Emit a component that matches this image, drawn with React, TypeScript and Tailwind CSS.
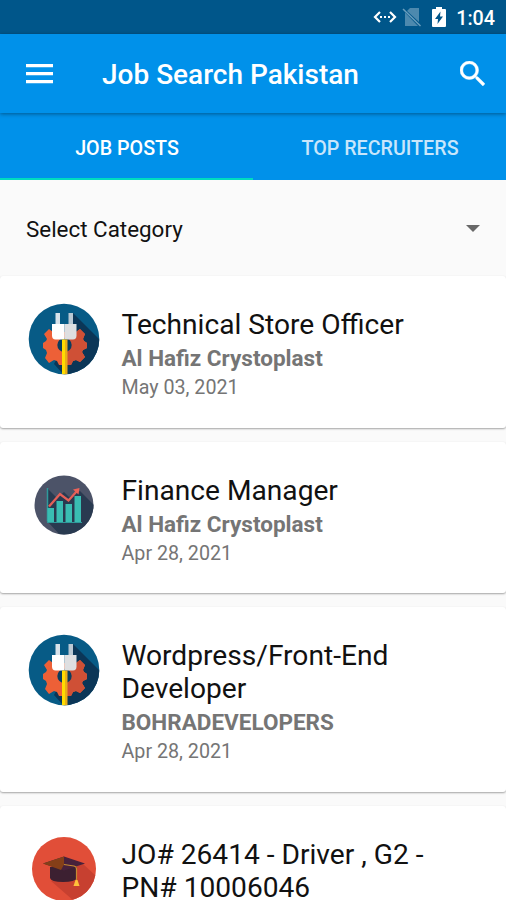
const jobs = [
  {
    title: "Technical Store Officer",
    company: "Al Hafiz Crystoplast",
    date: "May 03, 2021",
    icon: PlugIcon,
    height: "h-[151.5px]",
  },
  {
    title: "Finance Manager",
    company: "Al Hafiz Crystoplast",
    date: "Apr 28, 2021",
    icon: ChartIcon,
    height: "h-[151.5px]",
  },
  {
    title: "Wordpress/Front-End Developer",
    company: "BOHRADEVELOPERS",
    date: "Apr 28, 2021",
    icon: PlugIcon,
    height: "h-[185px]",
  },
  {
    title: "JO# 26414 - Driver , G2 - PN# 10006046",
    icon: GraduationIcon,
    height: "h-[185px]",
  },
];

function PlugIcon() {
  return (
    <svg viewBox="0 0 72 72" className="size-[72px]">
      <defs>
        <clipPath id="plug-circle">
          <circle cx="36" cy="36" r="35.3" />
        </clipPath>
      </defs>
      <g clipPath="url(#plug-circle)">
        <rect width="72" height="72" fill="#075b86" />
        <path d="M45 10 L72 37 V72 H36 L26 61 L44 25Z" fill="#0b3657" />
        <path
          d="M21 26 L25 29 H48 L52 26 L57 31 L55 36 L56 38 L59 40 V45 L55 47 L54 49 L57 54 L52 59 L48 57 L45 58 L43 62 H31 L29 58 L26 57 L21 60 L17 55 L19 50 L18 47 L15 45 V40 L18 38 L19 36 L16 31Z"
          fill="#ed6037"
        />
        <path d="M37 29H48 L52 26 L57 31 L55 36 L56 38 L59 40 V45 L55 47 L54 49 L57 54 L52 59 L48 57 L45 58 L43 62 H37Z" fill="#cf5036" />
        <circle cx="36.5" cy="42" r="7.2" fill="#0b3d5e" />
        <path d="M27.500 10h4.500v12h-4.500z" fill="#d8e2ea" />
        <path d="M40.500 10h4.500v12h-4.500z" fill="#b9c8d3" />
        <path d="M24 21h12.500v15.500h-9q-3.500 0-3.500-4z" fill="#fff" />
        <path d="M36.500 21h12v11.500q0 4-3.500 4h-8.500z" fill="#dedfe1" />
        <path d="M34 36.500h3V72h-3z" fill="#ffdc00" />
        <path d="M37 36.500h2.500V72H37z" fill="#e9ae18" />
      </g>
    </svg>
  );
}

function ChartIcon() {
  return (
    <svg viewBox="0 0 60 60" className="size-[60px]">
      <defs>
        <clipPath id="chart-circle">
          <circle cx="30" cy="30" r="29.5" />
        </clipPath>
      </defs>
      <g clipPath="url(#chart-circle)">
        <rect width="60" height="60" fill="#4c5368" />
        <path d="M14 14 L23 23 L30 17 L35 22 L46 16 L60 30 V60 H26 L14 47Z" fill="#293a50" />
        <path d="M13.500 13v33.500" stroke="#2f9a9b" strokeWidth="1.5" />
        <path d="M13.500 33h6.500v14h-6.500zM22.500 26h6.500v21h-6.500zM31.500 29h6.500v18h-6.500zM40.500 21h6.500v26h-6.500z" fill="#39bdb2" />
        <path d="M13 47.500h35" stroke="#2f9a9b" />
        <path d="M15 31.500 L26 19 L34.500 25.500 L43 16" fill="none" stroke="#e46058" strokeWidth="2.3" />
        <path d="M39 14.500 L45.500 13 L44.500 19.500Z" fill="#ed6258" />
      </g>
    </svg>
  );
}

function GraduationIcon() {
  return (
    <svg viewBox="0 0 64 64" className="size-[64px]">
      <defs>
        <clipPath id="graduation-circle">
          <circle cx="32" cy="32" r="32" />
        </clipPath>
      </defs>
      <g clipPath="url(#graduation-circle)">
        <rect width="64" height="64" fill="#e14e38" />
        <path d="M50 26 L64 39 V64 H42 L19 44Z" fill="#c74030" />
        <path d="M18 30v11q1 4 13 4t14-4V30z" fill="#3c2031" />
        <path d="M11 26.500 L32 19.500 L53 26.500 L32 33.500Z" fill="#48213b" />
        <path d="M11 26.500 L32 19.500 V27.500 L29 33Z" fill="#853f18" />
        <path d="M32 27.500 L42 29 Q44.500 29.500 44.500 32v13" fill="none" stroke="#c58a32" strokeWidth="1.2" />
        <path d="M43.500 43h2l2 6h-6z" fill="#ffc13b" />
      </g>
    </svg>
  );
}

function StatusBar() {
  return (
    <div className="flex h-[34px] items-center justify-end bg-[#00568a] pr-[11px] text-white">
      <svg viewBox="0 0 24 14" className="mr-[5px] h-[14px] w-[24px]" fill="none">
        <path d="M7 2 L2 7 L7 12 M17 2 L22 7 L17 12" stroke="currentColor" strokeWidth="2.2" />
        <path d="M7 6h2v2H7zM11 6h2v2h-2zM15 6h2v2h-2z" fill="currentColor" />
      </svg>
      <svg viewBox="0 0 20 20" className="mr-[10px] size-5">
        <path d="M8 1h9v14L5 4z" fill="#4d89ae" />
        <path d="M3 5.500L16 19H3z" fill="#4d89ae" />
        <path d="M1 2l17.500 17" stroke="#6b9ebd" strokeWidth="1.5" />
      </svg>
      <svg viewBox="0 0 14 22" className="mr-[10px] h-[22px] w-[14px]">
        <path d="M4 1h6v2h3q1 0 1 1v16q0 1-1 1H1q-1 0-1-1V4q0-1 1-1h3z" fill="currentColor" />
        <path d="M8.500 5.500L8 10.500h3L5.500 18l.5-5H3z" fill="#00568a" />
      </svg>
      <span className="mt-[3px] text-[19.7px] leading-none font-medium">1:04</span>
    </div>
  );
}

export default function App() {
  return (
    <div className="h-[900px] w-[506px] overflow-hidden bg-[#fafafa] font-['Roboto',sans-serif]">
      <StatusBar />

      <header className="relative flex h-[79px] items-center bg-[#0091ea] text-white shadow-[0_1px_4px_rgba(0,0,0,0.4)]">
        <svg viewBox="0 0 27 20" className="ml-[26px] h-[20px] w-[27px]" fill="currentColor">
          <path d="M0 0h27v3.300H0zM0 8h27v3.300H0zM0 16h27v3.300H0z" />
        </svg>
        <h1 className="ml-[49px] flex-1 pt-[2px] text-[28px] leading-8 font-medium">Job Search Pakistan</h1>
        <svg viewBox="3 3 17.5 17.5" className="mr-[21px] size-[25px]" fill="currentColor" stroke="currentColor" strokeWidth="0.3">
          <path d="M15.500 14h-.79l-.28-.27A6.470 6.470 0 0 0 16 9.500 6.500 6.500 0 1 0 9.500 16c1.610 0 3.090-.59 4.230-1.570l.27.28v.79l5 4.990L20.490 19l-4.990-5zm-6 0C7.010 14 5 11.990 5 9.500S7.010 5 9.500 5 14 7.010 14 9.500 11.990 14 9.500 14z" />
        </svg>
      </header>

      <nav className="grid h-[67px] grid-cols-2 bg-[#0091ea] text-center text-[19.7px] font-medium">
        <div className="border-b-2 border-[#00dcc0] pt-[21px] pl-px leading-[29px] text-white">JOB POSTS</div>
        <div className="pt-[21px] pl-px leading-[29px] text-[#c8e6fb]">TOP RECRUITERS</div>
      </nav>

      <div className="flex h-[96px] items-center justify-between px-[26px]">
        <span className="pt-[3px] text-[22.4px] text-[#111]">Select Category</span>
        <svg viewBox="0 0 14 7" className="h-[7px] w-[14px]" fill="#686868">
          <path d="M0 0h14L7 7z" />
        </svg>
      </div>

      <main className="flex flex-col gap-[14px]">
        {jobs.map((job) => (
          <article
            key={job.title}
            className={`${job.height} flex shrink-0 rounded-[3px] bg-white pt-[27px] pl-[27.5px] shadow-[0_1px_2px_rgba(0,0,0,0.35)]`}
          >
            <div className="flex size-[72px] items-center justify-center">
              <job.icon />
            </div>
            <div className="ml-[22px] w-[340px] pt-[5px]">
              <h2 className="text-[28.15px] leading-[33px] text-[#111]">{job.title}</h2>
              {job.company && (
                <p className="mt-[2px] text-[22.5px] leading-[30px] font-bold text-[#757575]">{job.company}</p>
              )}
              {job.date && <p className="text-[19.7px] leading-[29px] text-[#757575]">{job.date}</p>}
            </div>
          </article>
        ))}
      </main>
    </div>
  );
}
